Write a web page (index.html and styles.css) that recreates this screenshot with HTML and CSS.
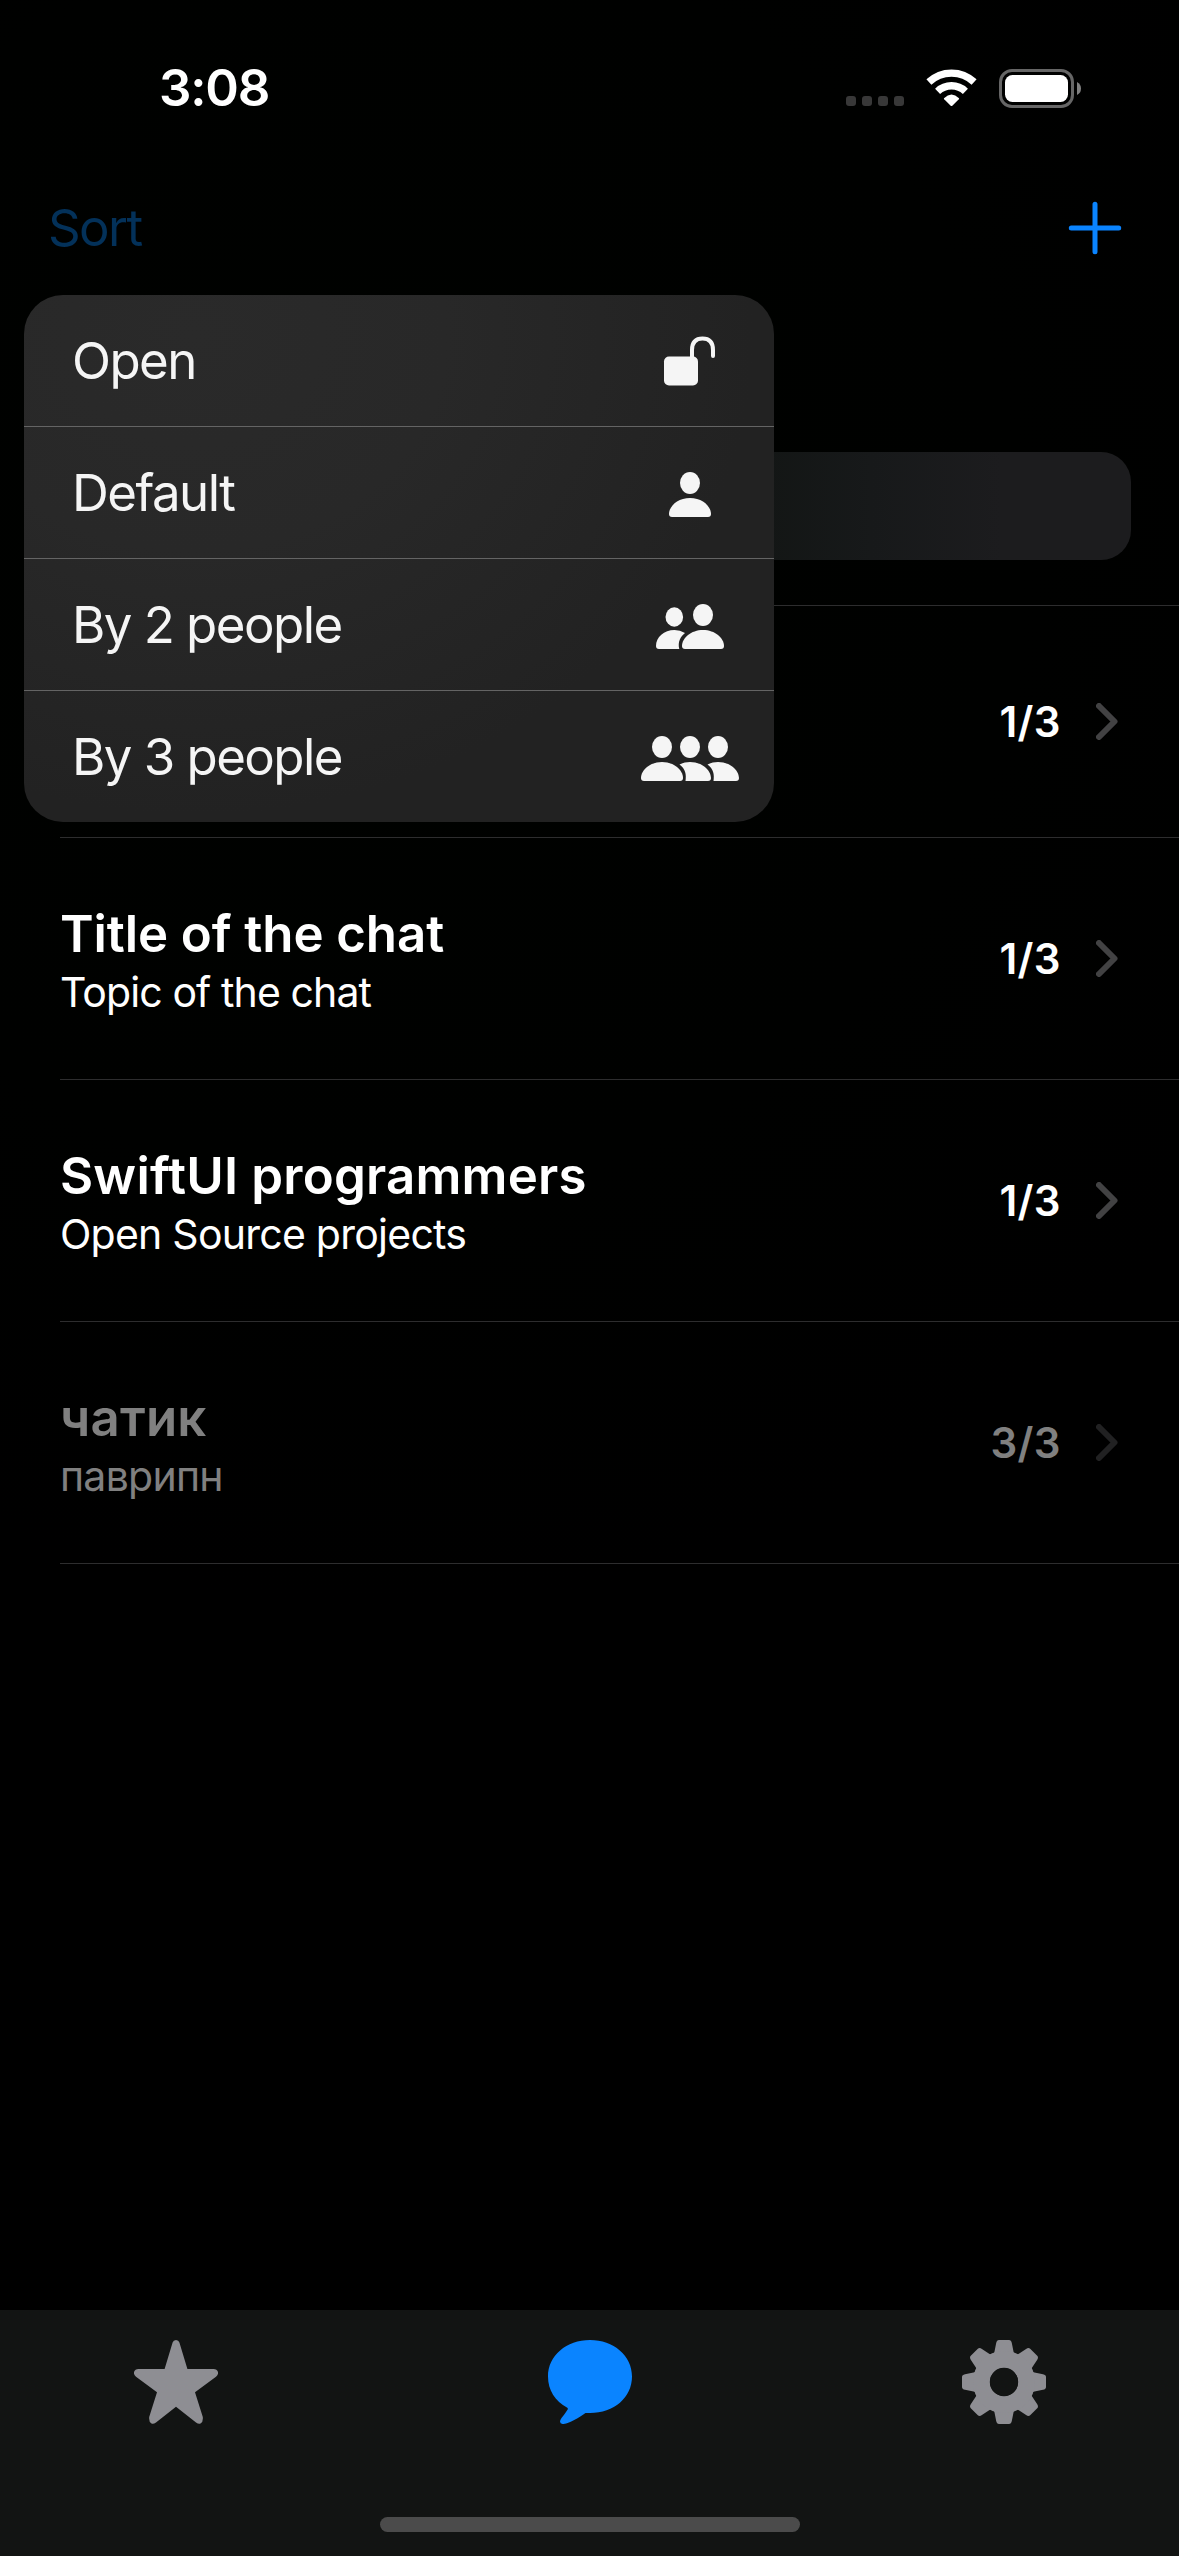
FILE: index.html
```html
<!DOCTYPE html>
<html lang="en">
<head>
<meta charset="utf-8">
<title>Chats</title>
<link rel="stylesheet" href="styles.css">
</head>
<body>
<div class="screen">
  <header class="status-bar">
    <time class="clock">3:08</time>
    <div class="status-icons">
      <svg class="signal" width="58" height="10" viewBox="0 0 58 10" fill="#383838">
        <rect width="10" height="10" rx="3"/><rect x="16" width="10" height="10" rx="3"/><rect x="32" width="10" height="10" rx="3"/><rect x="48" width="10" height="10" rx="3"/>
      </svg>
      <svg class="wifi" width="51" height="38" viewBox="0 0 51 38">
        <g fill="none" stroke="#fff" stroke-width="7.3">
          <path d="M2.900 13A33 33 0 0 1 48.100 13"/>
          <path d="M11.600 22.300A20.200 20.200 0 0 1 39.400 22.300"/>
        </g>
        <path fill="#fff" d="M18 29.200Q25.500 22 33 29.200Q33.300 29.700 32.800 30.200L26.300 36.700Q25.500 37.500 24.700 36.700L18.200 30.200Q17.700 29.700 18 29.200Z"/>
      </svg>
      <svg class="battery" width="82" height="39" viewBox="0 0 82 39">
        <rect x="1.5" y="1.5" width="72" height="36" rx="11.5" fill="none" stroke="#666" stroke-width="3"/>
        <rect x="6" y="6" width="63" height="27" rx="7.5" fill="#fff"/>
        <path d="M78 13V26Q82 24 82 19.500Q82 15 78 13Z" fill="#808080"/>
      </svg>
    </div>
  </header>

  <nav class="nav-bar">
    <span class="sort">Sort</span>
    <svg width="54" height="54" viewBox="0 0 54 54" stroke="#0a84ff" stroke-width="5" stroke-linecap="round"><path d="M27 3.300V50.700M3.300 27H50.700"/></svg>
  </nav>

  <div class="search"></div>

  <main class="chat-list">
    <div class="chat first">
      <div class="chat-text"></div>
      <span class="count">1/3</span>
      <svg class="chevron" viewBox="0 0 22 37"><path d="M3 3L18.500 18.500L3 34"/></svg>
    </div>
    <div class="chat">
      <div class="chat-text"><div class="title snug">Title of the chat</div><div class="topic snug">Topic of the chat</div></div>
      <span class="count">1/3</span>
      <svg class="chevron" viewBox="0 0 22 37"><path d="M3 3L18.500 18.500L3 34"/></svg>
    </div>
    <div class="chat">
      <div class="chat-text"><div class="title">SwiftUI programmers</div><div class="topic">Open Source projects</div></div>
      <span class="count">1/3</span>
      <svg class="chevron" viewBox="0 0 22 37"><path d="M3 3L18.500 18.500L3 34"/></svg>
    </div>
    <div class="chat">
      <div class="chat-text full"><div class="title">чатик</div><div class="topic">паврипн</div></div>
      <span class="count full">3/3</span>
      <svg class="chevron full" viewBox="0 0 22 37"><path d="M3 3L18.500 18.500L3 34"/></svg>
    </div>
  </main>

  <footer class="tab-bar">
    <div class="tabs">
      <svg width="84" height="84" viewBox="0 0 84 84" fill="#8e8e93"><path d="M38.600 2.500Q39.300 0 42 0T45.400 2.500L53.400 29H79.500Q83 29 84 32Q84.500 34.500 82 36.800L61 52.300L68.800 77Q69.300 82 66.500 83.600Q64.500 84.300 62 82.600L42 66.700L22 82.600Q19.500 84.300 17.500 83.600Q14.700 82 15.200 77L23 52.300L2 36.800Q-.5 34.500 0 32Q1 29 4.500 29H30.600Z"/></svg>
      <svg width="84" height="84" viewBox="0 0 84 84" fill="#0a84ff"><path d="M42 0C65.500 0 84 15.500 84 36.500S66 73 42 73H37.500C31 77.800 22.500 82.800 15.500 84Q12 84.200 12 81.500Q12 80 13.500 78C16 75 18.200 72 19.800 69.300Q20 68.500 19.300 67.800C7 61 0 50 0 36.500C0 15.500 18.500 0 42 0Z"/></svg>
      <svg width="84" height="84" viewBox="0 0 84 84">
        <defs><path id="tooth" d="M31 14Q32.300 13.300 32.500 11.500L34.200 3Q34.800 0 37 0H47Q49.200 0 49.800 3L51.500 11.500Q51.700 13.300 53 14L42 26Z"/></defs>
        <g fill="#8e8e93">
          <use href="#tooth"/><use href="#tooth" transform="rotate(45 42 42)"/><use href="#tooth" transform="rotate(90 42 42)"/><use href="#tooth" transform="rotate(135 42 42)"/><use href="#tooth" transform="rotate(180 42 42)"/><use href="#tooth" transform="rotate(225 42 42)"/><use href="#tooth" transform="rotate(270 42 42)"/><use href="#tooth" transform="rotate(315 42 42)"/>
        </g>
        <circle cx="42" cy="42" r="22.500" fill="none" stroke="#8e8e93" stroke-width="17"/>
        <circle cx="42" cy="42" r="14.200" fill="#121413"/>
      </svg>
    </div>
    <div class="home-indicator"></div>
  </footer>

  <div class="menu">
    <div class="item"><span>Open</span>
      <svg width="98" height="60" viewBox="0 0 98 60"><rect x="23" y="25.500" width="34" height="29" rx="5"/><path d="M51 27V19Q51 7.500 61.500 7.500T72 19V25" fill="none" stroke="#f5f5f5" stroke-width="4" stroke-linecap="round"/></svg>
    </div>
    <div class="item"><span>Default</span>
      <svg width="98" height="60" viewBox="0 0 98 60">
        <defs><g id="person"><ellipse cx="49" cy="20" rx="10" ry="11"/><path d="M31 54Q28 54 28 51C28 43 37 35 49 35S70 43 70 51Q70 54 67 54Z"/></g></defs>
        <use href="#person"/>
      </svg>
    </div>
    <div class="item"><span>By 2 people</span>
      <svg width="98" height="60" viewBox="0 0 98 60">
        <ellipse cx="33.300" cy="22" rx="8.800" ry="9.700"/><path d="M18 54Q15 54 15 51C15 42 23 35 33.500 35Q39 35 44 38C39.500 41.500 36.500 47 38.300 54Z"/>
        <use href="#person" x="13"/>
      </svg>
    </div>
    <div class="item"><span>By 3 people</span>
      <svg width="98" height="60" viewBox="0 0 98 60">
        <use href="#person" x="-28"/>
        <ellipse cx="49" cy="20" rx="10" ry="11"/><ellipse cx="77" cy="20" rx="10" ry="11"/>
        <path id="behind" d="M38.500 37.400Q43 35 49 35C61 35 70 43 70 51Q70 54 67 54H44.500C45.500 47 44.500 42 38.500 37.400Z"/>
        <use href="#behind" x="28"/>
      </svg>
    </div>
  </div>
</div>
</body>
</html>
```
FILE: styles.css
```css
* { box-sizing: border-box; }

body {
  margin: 0;
  background: #000;
  color: #fff;
  font-family: Inter, "Liberation Sans", sans-serif;
}

svg { display: block; flex: none; }

.screen {
  position: relative;
  display: flex;
  flex-direction: column;
  width: 1179px;
  height: 2556px;
  overflow: hidden;
  background: radial-gradient(circle 1050px at 390px 560px, #000200, #000100 60%, #000);
}

.status-bar {
  display: flex;
  align-items: center;
  justify-content: space-between;
  height: 176px;
  padding: 0 98px 0 159px;
}

.clock { font-size: 51px; font-weight: 600; line-height: 60px; letter-spacing: -1.2px; }

.status-icons { display: flex; align-items: center; }
.signal { margin: 26px 22px 0 0; }
.wifi { margin-right: 22px; }

.nav-bar {
  display: flex;
  align-items: center;
  justify-content: space-between;
  height: 103px;
  padding: 0 57px 0 48px;
}

.sort { color: #033159; font-size: 51px; line-height: 60px; letter-spacing: -1.6px; }

.search {
  height: 108px;
  margin: 173px 48px 0;
  border-radius: 30px;
  background: linear-gradient(90deg, #131615 66%, #17191a 76%, #1c1c1e 88%);
}

.chat-list { flex: 1; margin: 45px 0 0 60px; border-top: 1px solid #2d2d2e; }

.chat {
  display: flex;
  align-items: center;
  height: 242px;
  padding-right: 61px;
  border-bottom: 1px solid #2d2d2e;
}
.chat.first { height: 232px; }

.chat-text { flex: 1; padding-top: 5px; }
.title { font-size: 51px; font-weight: 600; line-height: 61px; letter-spacing: 0.2px; }
.title.snug { letter-spacing: -0.1px; }
.topic { font-size: 41px; line-height: 56px; letter-spacing: -0.75px; }
.topic.snug { letter-spacing: -0.9px; }
.count { font-size: 42px; font-weight: 600; letter-spacing: 0.4px; }

.chevron {
  width: 22px;
  height: 37px;
  margin-left: 35px;
  fill: none;
  stroke: #424243;
  stroke-width: 6;
  stroke-linecap: round;
  stroke-linejoin: round;
}

.chat-text.full, .count.full { color: #808080; }
.chevron.full { stroke: #212122; }

.tab-bar { height: 246px; padding-top: 30px; background: #121413; }
.tabs { display: flex; justify-content: space-between; padding: 0 133px 0 134px; }
.home-indicator { width: 420px; height: 15px; margin: 93px auto 0; border-radius: 8px; background: #4b4b4b; }

.menu {
  position: absolute;
  left: 24px;
  top: 295px;
  width: 750px;
  border-radius: 39px;
  overflow: hidden;
  background: radial-gradient(ellipse 560px 480px at 170px 40px, #2a2a2a, #282828 45%, #222222);
}

.item {
  display: flex;
  align-items: center;
  justify-content: space-between;
  height: 132px;
  padding: 0 35px 0 48px;
  border-bottom: 1px solid #646464;
  color: #f5f5f5;
  fill: #f5f5f5;
  font-size: 51px;
  line-height: 60px;
  letter-spacing: -1.55px;
}
.item:last-child { height: 131px; border-bottom: 0; }
```
